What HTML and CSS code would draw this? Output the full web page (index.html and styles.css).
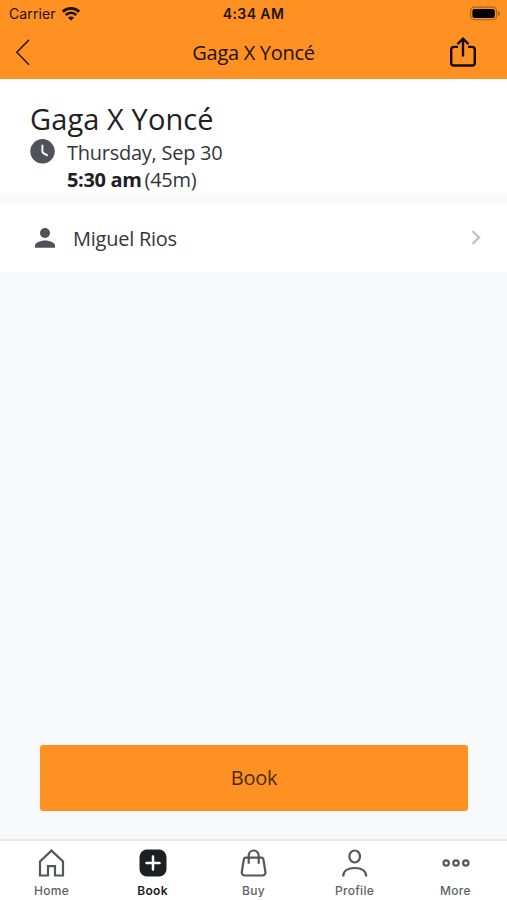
FILE: index.html
```html
<!DOCTYPE html>
<html lang="en">
<head>
    <meta charset="UTF-8">
    <meta name="viewport" content="width=device-width, initial-scale=1.0">
    <title>Gaga X Yoncé</title>
    <link rel="stylesheet" href="styles.css">
</head>
<body>
    <div class="screen">
        <header class="header">
            <div class="status-bar">
                <div class="carrier">
                    <span>Carrier</span>
                    <svg width="18" height="14" viewBox="0 0 18 14">
                        <path d="M.8 4.7a11.7 11.7 0 0 1 16.4 0" fill="none" stroke="#1c1005" stroke-width="2.7"/>
                        <path d="M3.7 8a7.5 7.5 0 0 1 10.6 0" fill="none" stroke="#1c1005" stroke-width="2.5"/>
                        <path d="M9 13.6L6 10.7a4.2 4.2 0 0 1 6 0z" fill="#1c1005"/>
                    </svg>
                </div>
                <div class="time">4:34 AM</div>
                <div class="battery">
                    <svg width="31" height="14" viewBox="0 0 31 14">
                        <rect x="0.6" y="0.1" width="26" height="12.6" rx="3.8" fill="none" stroke="#a8611c" stroke-width="1.1"/>
                        <rect x="2.4" y="1.9" width="22.4" height="9" rx="2" fill="#000"/>
                        <path d="M28 4.1v4.8c1.2-.5 2-1.3 2-2.4s-.8-1.9-2-2.4z" fill="#a8611c"/>
                    </svg>
                </div>
            </div>
            <div class="nav-bar">
                <a href="#" class="back" aria-label="Back">
                    <svg width="16" height="28" viewBox="0 0 16 28">
                        <path d="M14 1.9L1.8 14.3 14 26.7" fill="none" stroke="#2b1a08" stroke-width="1.5"/>
                    </svg>
                </a>
                <h1>Gaga X Yoncé</h1>
                <a href="#" class="share" aria-label="Share">
                    <svg width="26" height="30" viewBox="0 0 26 30">
                        <path d="M8 9.9H4a2.8 2.8 0 0 0-2.8 2.8v13a2.8 2.8 0 0 0 2.8 2.8h18a2.8 2.8 0 0 0 2.8-2.8v-13a2.8 2.8 0 0 0-2.8-2.8H18M13 19.5V2M7.5 7.2L13 1.7l5.5 5.5" fill="none" stroke="#150b02" stroke-width="2.4"/>
                    </svg>
                </a>
            </div>
        </header>

        <main class="content">
            <section class="class-info">
                <h2>Gaga X Yoncé</h2>
                <div class="schedule">
                    <svg class="clock" width="25" height="25" viewBox="0 0 25 25">
                        <circle cx="12.5" cy="12.3" r="12.2" fill="#50525a"/>
                        <path d="M12.4 5.8v6.6c0 .8.4 1.3 1 1.7l4.3 2.5" fill="none" stroke="#fff" stroke-width="1.9"/>
                    </svg>
                    <div class="date">
                        <p>Thursday, Sep 30</p>
                        <p><strong>5:30 am</strong><span class="duration">(45m)</span></p>
                    </div>
                </div>
            </section>

            <a href="#" class="instructor">
                <svg class="person" width="20" height="20" viewBox="0 0 20 20">
                    <circle cx="10" cy="5" r="5" fill="#50525a"/>
                    <path d="M0 19.7v-2.2c0-3.3 6.7-5 10-5s10 1.7 10 5v2.2z" fill="#50525a"/>
                </svg>
                <span>Miguel Rios</span>
                <svg class="chevron" width="10" height="16" viewBox="0 0 10 16">
                    <path d="M1.4 1L8 7.5 1.4 14" fill="none" stroke="#c3c3c5" stroke-width="2.4"/>
                </svg>
            </a>
        </main>

        <div class="action">
            <button class="book-button">Book</button>
        </div>

        <nav class="tab-bar">
            <a href="#" class="tab">
                <svg width="28" height="28" viewBox="0 0 28 28" fill="none" stroke="#55575c" stroke-width="2.2">
                    <path d="M2 26.5V12.4L13.5 1.6 25 12.4v14.1h-8v-9.3h-7v9.3z"/>
                </svg>
                <span>Home</span>
            </a>
            <a href="#" class="tab active">
                <svg width="28" height="28" viewBox="0 0 28 28">
                    <rect x="0.5" y="0.5" width="27" height="27" rx="7.5" fill="#1e1f23"/>
                    <path d="M14 7.5v13M7.5 14h13" stroke="#fff" stroke-width="2.5" stroke-linecap="round"/>
                </svg>
                <span>Book</span>
            </a>
            <a href="#" class="tab">
                <svg width="28" height="28" viewBox="0 0 28 28" fill="none" stroke="#55575c" stroke-width="2.2">
                    <path d="M5.8 8.6h15.6a2 2 0 0 1 2 1.7l2 12.7a3 3 0 0 1-3 3.5H4.800a3 3 0 0 1-3-3.500l2-12.700a2 2 0 0 1 2-1.700z"/>
                    <path d="M8.700 14.800V6.500a5 5 0 0 1 10 0v8.300"/>
                </svg>
                <span>Buy</span>
            </a>
            <a href="#" class="tab">
                <svg width="28" height="28" viewBox="0 0 28 28" fill="none" stroke="#55575c" stroke-width="2.2">
                    <ellipse cx="13.7" cy="7.5" rx="5.3" ry="6"/>
                    <path d="M2.2 27.5c0-5.5 4.5-8.5 11.500-8.500s11.500 3 11.500 8.500"/>
                </svg>
                <span>Profile</span>
            </a>
            <a href="#" class="tab">
                <svg width="28" height="28" viewBox="0 0 28 28" fill="none" stroke="#55575c" stroke-width="2.2">
                    <circle cx="4.2" cy="14" r="2.7"/>
                    <circle cx="14" cy="14" r="2.7"/>
                    <circle cx="23.8" cy="14" r="2.7"/>
                </svg>
                <span>More</span>
            </a>
        </nav>
    </div>
</body>
</html>
```
FILE: styles.css
```css
* {
    margin: 0;
    padding: 0;
    box-sizing: border-box;
}

body {
    font-family: 'Open Sans', 'Noto Sans', sans-serif;
    background: #f8f9fb;
    color: #1f2024;
}

a {
    color: inherit;
    text-decoration: none;
}

svg {
    display: block;
    flex-shrink: 0;
    overflow: visible;
}

.screen {
    display: flex;
    flex-direction: column;
    height: 100vh;
}

/* Header */
.header {
    height: 79px;
    background: #ff9022;
    color: #211304;
}

.status-bar {
    display: grid;
    grid-template-columns: 1fr auto 1fr;
    align-items: center;
    height: 27px;
    padding: 0 6px 0 9px;
    font-family: Inter, sans-serif;
    font-size: 14px;
}

.carrier {
    display: flex;
    align-items: center;
    gap: 6px;
    letter-spacing: 0.1px;
}

.time {
    margin-right: 3px;
    font-weight: 600;
    letter-spacing: 0.4px;
}

.battery {
    justify-self: end;
}

.nav-bar {
    display: grid;
    grid-template-columns: 1fr auto 1fr;
    align-items: center;
    height: 50px;
    padding: 0 31px 0 15px;
}

.nav-bar h1 {
    padding-left: 16px;
    font-size: 20px;
    font-weight: 400;
    letter-spacing: -0.3px;
}

.share {
    justify-self: end;
}

/* Class details */
.content {
    flex: 1;
}

.class-info {
    height: 114px;
    padding: 20px 30px 0;
    background: #fff;
}

.class-info h2 {
    font-size: 29px;
    font-weight: 400;
    line-height: 40px;
    letter-spacing: 0.1px;
}

.schedule {
    display: flex;
    gap: 12px;
    font-size: 20px;
    line-height: 27px;
    letter-spacing: -0.25px;
    color: #35363a;
}

.schedule strong {
    color: #1f2024;
    letter-spacing: -0.35px;
}

.duration {
    margin-left: 3px;
}

.instructor {
    display: flex;
    align-items: center;
    height: 79px;
    padding: 0 26px 0 35px;
    background: #fff;
    border-top: 11px solid #fafafb;
    font-size: 20px;
    letter-spacing: -0.25px;
    color: #35363a;
}

.instructor span {
    flex: 1;
    margin-left: 18px;
}

/* Book button */
.action {
    padding: 0 39px 28px 40px;
}

.book-button {
    display: block;
    width: 100%;
    height: 66px;
    padding-bottom: 2px;
    background: #ff9022;
    border: none;
    border-radius: 3px;
    font-family: inherit;
    font-size: 20px;
    letter-spacing: -0.3px;
    color: #4a2c0e;
}

/* Bottom tabs */
.tab-bar {
    display: flex;
    height: 61px;
    padding: 8px 1px 0;
    background: #fff;
    border-top: 2px solid #e6e8ea;
}

.tab {
    flex: 1;
    display: flex;
    flex-direction: column;
    align-items: center;
    gap: 6px;
    font-family: Inter, sans-serif;
    font-size: 12px;
    font-weight: 500;
    line-height: 16px;
    letter-spacing: 0.3px;
    color: #606267;
}

.tab.active {
    color: #1f2024;
    font-weight: 600;
}
```
